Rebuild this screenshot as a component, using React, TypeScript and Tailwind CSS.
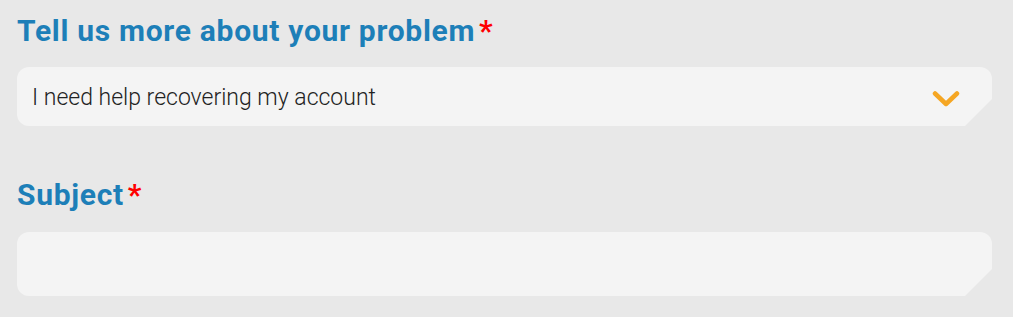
// Support form: problem picker and subject field, as shown on the help page.

import { useState } from 'react';

const PROBLEMS = [
  'I need help recovering my account',
  'I have a billing question',
  'I found a bug',
  'Something else',
];

const fieldShape =
  'rounded-[12px] bg-[#f4f4f4] [clip-path:polygon(0_0,100%_0,100%_calc(100%-27px),calc(100%-27px)_100%,0_100%)]';

function Label({ children }: { children: React.ReactNode }) {
  return (
    <label className="block text-[30px] leading-[34px] font-bold tracking-[0.7px] text-[#1d7fb8]">
      {children}
      <span className="ml-1 text-[#ff0000]">*</span>
    </label>
  );
}

function Chevron() {
  return (
    <svg width="28" height="18" viewBox="0 0 28 18" fill="none" aria-hidden="true">
      <path
        d="M3 3.5 L14 14 L25 3.5"
        stroke="#f5a623"
        strokeWidth="4.5"
        strokeLinecap="round"
        strokeLinejoin="round"
      />
    </svg>
  );
}

export default function App() {
  const [problem, setProblem] = useState(PROBLEMS[0]);
  const [subject, setSubject] = useState('');

  return (
    <div
      className="min-h-[317px] w-full bg-[#e8e8e8] pt-[14px] pl-[17px] pr-[21px]"
      style={{ fontFamily: 'Roboto, "Liberation Sans", sans-serif' }}
    >
      <Label>Tell us more about your problem</Label>
      <div className={`relative mt-[19px] flex h-[59px] items-center pt-1 ${fieldShape}`}>
        <select
          value={problem}
          onChange={(e) => setProblem(e.target.value)}
          className="h-full w-full appearance-none bg-transparent pl-[15px] pr-16 text-[23px] font-light text-[#222] outline-none"
        >
          {PROBLEMS.map((p) => (
            <option key={p}>{p}</option>
          ))}
        </select>
        <span className="pointer-events-none absolute right-[32px] top-[23px]">
          <Chevron />
        </span>
      </div>

      <div className="mt-[52px]">
        <Label>Subject</Label>
      </div>
      <div className={`mt-[20px] h-[64px] ${fieldShape}`}>
        <input
          value={subject}
          onChange={(e) => setSubject(e.target.value)}
          className="h-full w-full bg-transparent px-[17px] text-[23px] font-light text-[#222] outline-none"
        />
      </div>
    </div>
  );
}
